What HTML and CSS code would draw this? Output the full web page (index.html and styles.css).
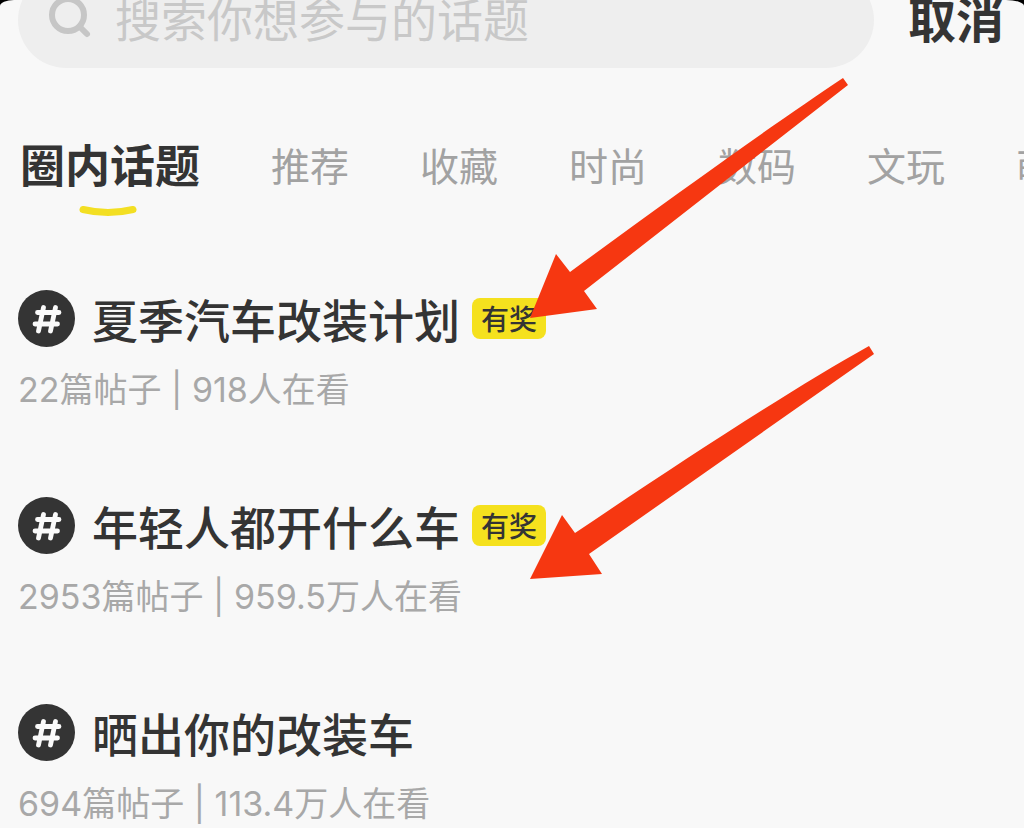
FILE: index.html
```html
<!DOCTYPE html>
<html lang="zh-CN">
<head>
  <meta charset="utf-8">
  <meta name="viewport" content="width=device-width, initial-scale=1">
  <title>话题搜索</title>
  <link rel="stylesheet" href="styles.css">
</head>
<body>
  <svg class="sprite" aria-hidden="true">
    <symbol id="hash" viewBox="0 0 57 57">
      <circle cx="28.5" cy="28.5" r="28.5" fill="#343434"/>
      <path d="M25.5 17.5 L20.5 41 M37.5 17.5 L32.5 41 M19.5 22.5 H41 M17 34 H39.5" fill="none" stroke="#fafafa" stroke-width="4.8" stroke-linecap="round"/>
    </symbol>
  </svg>

  <div class="page">
    <!-- 搜索栏 -->
    <header class="header">
      <label class="search">
        <svg class="search-icon" viewBox="0 0 44 44" aria-hidden="true">
          <circle cx="20" cy="17" r="16"/>
          <path d="M31.5 28.5 L39 36"/>
        </svg>
        <input type="text" class="search-input" placeholder="搜索你想参与的话题" aria-label="搜索">
      </label>
      <button type="button" class="cancel">取消</button>
    </header>

    <!-- 分类标签 -->
    <nav class="tabs">
      <button type="button" class="tab active">
        圈内话题
        <svg class="tab-line" viewBox="0 0 58 13" aria-hidden="true"><path d="M4 4.5 Q29 10.5 54 4.5"/></svg>
      </button>
      <button type="button" class="tab">推荐</button>
      <button type="button" class="tab">收藏</button>
      <button type="button" class="tab">时尚</button>
      <button type="button" class="tab">数码</button>
      <button type="button" class="tab">文玩</button>
      <button type="button" class="tab">萌宠</button>
    </nav>

    <!-- 话题列表 -->
    <main class="topics">
      <article class="topic">
        <div class="topic-head">
          <svg class="topic-icon" aria-hidden="true"><use href="#hash"/></svg>
          <a href="#" class="topic-title">夏季汽车改装计划</a>
          <span class="badge">有奖</span>
        </div>
        <p class="topic-meta">22篇帖子 | 918人在看</p>
      </article>
      <article class="topic">
        <div class="topic-head">
          <svg class="topic-icon" aria-hidden="true"><use href="#hash"/></svg>
          <a href="#" class="topic-title">年轻人都开什么车</a>
          <span class="badge">有奖</span>
        </div>
        <p class="topic-meta">2953篇帖子 | 959.5万人在看</p>
      </article>
      <article class="topic">
        <div class="topic-head">
          <svg class="topic-icon" aria-hidden="true"><use href="#hash"/></svg>
          <a href="#" class="topic-title">晒出你的改装车</a>
        </div>
        <p class="topic-meta">694篇帖子 | 113.4万人在看</p>
      </article>
    </main>

    <!-- 标注箭头 -->
    <svg class="arrows" width="1024" height="828" viewBox="0 0 1024 828" aria-hidden="true">
      <path d="M530 318 L556 254 L570 272 C660 206 765 130 843 78 L848 85 L584 291 L597 309 Z"/>
      <path d="M530 579 L562 515 L575 533 C670 469 790 390 869 346 L874 354 L589 554 L602 574 Z"/>
    </svg>
  </div>
</body>
</html>
```

FILE: styles.css
```css
* {
  box-sizing: border-box;
}

body {
  margin: 0;
  background: #000;
  font-family: "Noto Sans CJK SC", sans-serif;
  color: #343434;
}

button {
  padding: 0;
  border: none;
  background: none;
  font-family: inherit;
  color: inherit;
  cursor: pointer;
}

.sprite {
  display: none;
}

.page {
  position: relative;
  min-height: 100vh;
  overflow: hidden;
  background: #f8f8f8;
  border-radius: 14px 18px 0 0 / 6px 6px 0 0;
}

/* 搜索栏 */
.header {
  display: flex;
  align-items: center;
  gap: 34px;
  height: 96px;
  margin-top: -28px;
  padding: 0 20px 0 18px;
}

.search {
  flex: 1;
  display: flex;
  align-items: center;
  gap: 23px;
  height: 96px;
  padding: 0 30px;
  border-radius: 48px;
  background: #eee;
}

.search-icon {
  flex: none;
  width: 44px;
  height: 44px;
  fill: none;
  stroke: #c6c6c6;
  stroke-width: 6;
  stroke-linecap: round;
}

.search-input {
  flex: 1;
  min-width: 0;
  padding: 0 0 6px;
  border: none;
  outline: none;
  background: none;
  font-family: inherit;
  font-size: 46px;
  line-height: 64px;
  color: #343434;
}

.search-input::placeholder {
  color: #c8c8c8;
  opacity: 1;
}

.cancel {
  padding-bottom: 6px;
  font-size: 48px;
  font-weight: 700;
  line-height: 64px;
}

/* 分类标签 */
.tabs {
  display: flex;
  align-items: center;
  gap: 71px;
  height: 64px;
  margin-top: 64px;
  padding-left: 20px;
}

.tab {
  position: relative;
  flex: none;
  font-size: 39px;
  line-height: 64px;
  color: #a2a2a2;
}

.tab.active {
  font-size: 45px;
  font-weight: 700;
  color: #343434;
}

.tab-line {
  position: absolute;
  left: 59px;
  top: 73px;
  width: 58px;
  height: 13px;
  fill: none;
  stroke: #f3df23;
  stroke-width: 7;
  stroke-linecap: round;
}

/* 话题列表 */
.topics {
  display: flex;
  flex-direction: column;
  gap: 83px;
  margin-top: 90px;
  padding: 0 18px;
}

.topic-head {
  display: flex;
  align-items: center;
  height: 64px;
}

.topic-icon {
  flex: none;
  width: 57px;
  height: 57px;
  margin-right: 17px;
}

.topic-title {
  font-size: 46px;
  font-weight: 500;
  line-height: 64px;
  color: inherit;
  text-decoration: none;
}

.badge {
  margin-left: 12px;
  padding: 0 9px;
  border-radius: 8px;
  background: #f5e11e;
  font-size: 28px;
  font-weight: 500;
  line-height: 41px;
}

.topic-meta {
  margin: 20px 0 0;
  font-family: Inter, "Noto Sans CJK SC", sans-serif;
  font-size: 34px;
  line-height: 40px;
  color: #a8a8a8;
}

.arrows {
  position: absolute;
  left: 0;
  top: 0;
  fill: #f63711;
  pointer-events: none;
}
```
